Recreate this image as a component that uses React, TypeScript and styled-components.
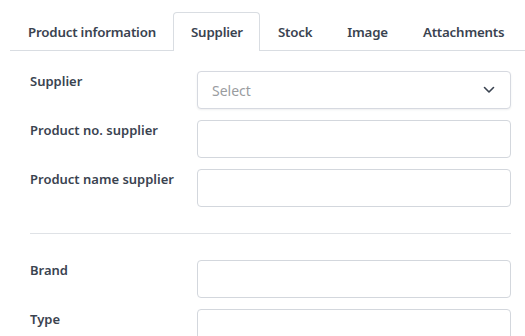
import React from "react";
import styled, { createGlobalStyle } from "styled-components";

const Global = createGlobalStyle`
  html, body { margin: 0; padding: 0; background: #ffffff; }
  body { font-family: "Noto Sans", "Open Sans", sans-serif; color: #3a4350; }
  * { box-sizing: border-box; }
`;

const Page = styled.div`
  width: 525px;
  height: 336px;
  overflow: hidden;
  padding-top: 12px;
`;

const TabBar = styled.div`
  display: flex;
  margin-left: 10px;
  border-bottom: 1px solid #d9dde2;
`;

const Tab = styled.div<{ $active?: boolean }>`
  flex-shrink: 0;
  white-space: nowrap;
  padding: 0 16px 0 17px;
  display: flex;
  align-items: center;
  font-size: 13.3px;
  font-weight: 600;
  letter-spacing: -0.2px;
  color: #3a4350;
  border: 1px solid ${(p) => (p.$active ? "#d9dde2" : "transparent")};
  border-bottom: none;
  border-radius: 4px 4px 0 0;
  background: #fff;
  margin-bottom: ${(p) => (p.$active ? "-1px" : "0")};
  height: ${(p) => (p.$active ? "39px" : "38px")};
`;

const Form = styled.div`
  padding: 20px 14px 0 30px;
`;

const Row = styled.div`
  display: grid;
  grid-template-columns: 167px 1fr;
  margin-bottom: 11px;
`;

const Label = styled.div`
  font-size: 13px;
  font-weight: 600;
  color: #3a4350;
  padding-top: 1px;
  line-height: 18px;
`;

const Input = styled.div`
  height: 38px;
  border: 1px solid #d3d7dd;
  border-radius: 4px;
  background: #fff;
`;

const Select = styled.div`
  height: 38px;
  border: 1px solid #d6d9e0;
  border-radius: 4px;
  background: #fff;
  box-shadow: 0 1px 2px rgba(40, 50, 70, 0.08);
  display: flex;
  align-items: center;
  justify-content: space-between;
  padding: 0 15px 0 14px;
  font-size: 14px;
  color: #9a9c9f;
`;

const Divider = styled.div`
  height: 1px;
  background: #dfe2e6;
  margin: 26px 0 26px 0;
`;

const Chevron = () => (
  <svg width="12" height="8" viewBox="0 0 12 8" fill="none">
    <path d="M1.5 1.5 L6 6 L10.5 1.5" stroke="#3a4350" strokeWidth="1.6" strokeLinecap="round" strokeLinejoin="round" />
  </svg>
);

export default function App() {
  const tabs = ["Product information", "Supplier", "Stock", "Image", "Attachments"];
  return (
    <Page>
      <Global />
      <TabBar>
        {tabs.map((t) => (
          <Tab key={t} $active={t === "Supplier"}>
            {t}
          </Tab>
        ))}
      </TabBar>
      <Form>
        <Row>
          <Label>Supplier</Label>
          <Select>
            <span>Select</span>
            <Chevron />
          </Select>
        </Row>
        <Row>
          <Label>Product no. supplier</Label>
          <Input />
        </Row>
        <Row>
          <Label>Product name supplier</Label>
          <Input />
        </Row>
        <Divider />
        <Row>
          <Label>Brand</Label>
          <Input />
        </Row>
        <Row>
          <Label>Type</Label>
          <Input />
        </Row>
      </Form>
    </Page>
  );
}
